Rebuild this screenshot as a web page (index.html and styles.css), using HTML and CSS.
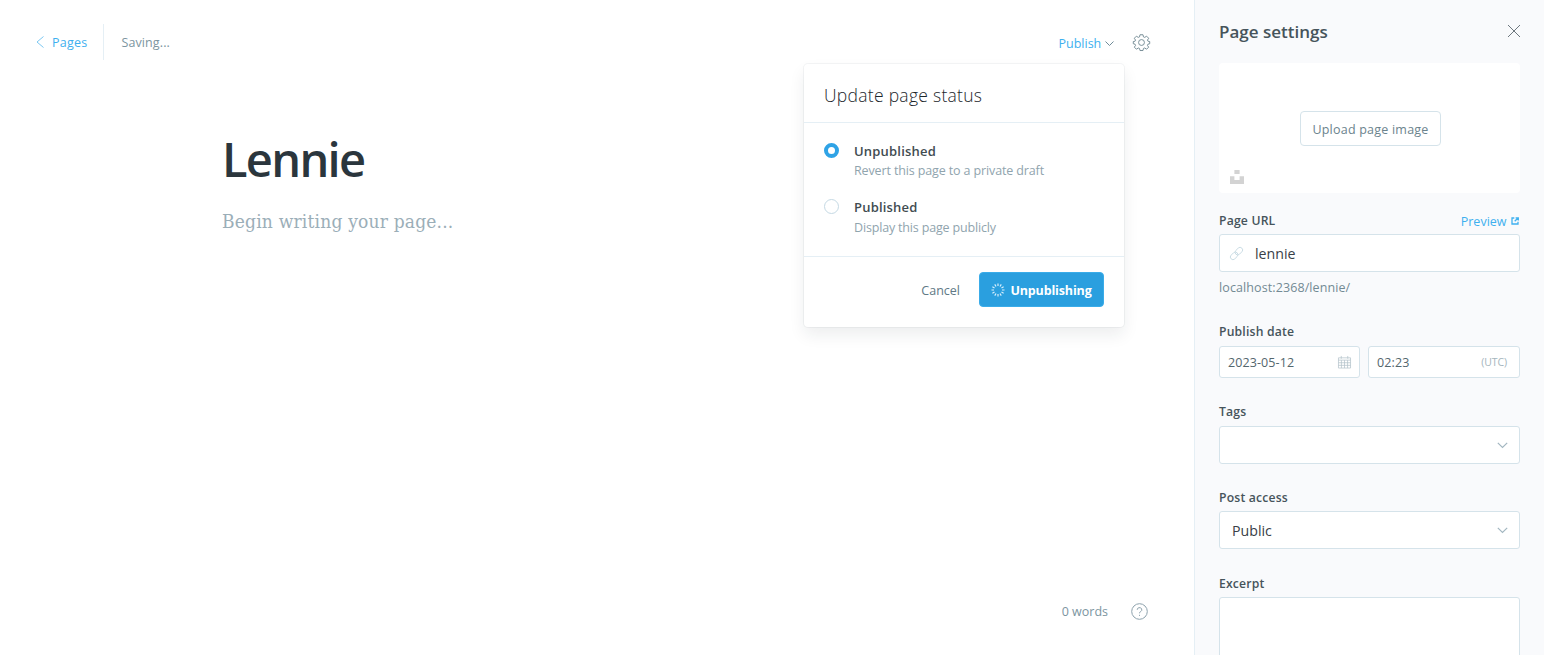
FILE: index.html
```
<!DOCTYPE html>
<html lang="en">
<head>
<meta charset="utf-8">
<title>Lennie</title>
<link rel="stylesheet" href="styles.css">
</head>
<body>
<div class="app">
  <main class="editor">
    <header class="topbar">
      <a class="back"><svg class="icon-back" viewBox="0 0 8 12"><path d="M7.500.5 1 6 7.500 11.500"/></svg><span class="t-pages">Pages</span></a>
      <span class="saving">Saving...</span>
      <div class="actions">
        <a class="publish"><span class="t-publish">Publish</span><svg class="icon-caret" viewBox="0 0 9 5"><path d="M.5.5 4.500 4.500 8.500.5"/></svg></a>
        <svg class="icon-gear" viewBox="-9 -9 18 18"><path d="M-1.600-8.200h3.200l.5 2.300 1.300.5 2-1.300 2.200 2.200-1.300 2 .5 1.100 1.900.4v2.300l-1.900.5-.5 1.300 1.300 1.800-2.200 2.200-2-1.300-1.300.5-.5 2.200h-3.200l-.5-2.200-1.300-.5-2 1.300-2.200-2.200 1.300-1.800-.5-1.300-1.900-.5v-2.300l1.900-.4.5-1.100-1.300-2 2.200-2.200 2 1.300 1.300-.5z"/><circle r="3.100"/></svg>
      </div>
    </header>
    <section class="content">
      <h1 class="title">Lennie</h1>
      <p class="placeholder">Begin writing your page...</p>
    </section>
    <footer class="footer">
      <span class="words">0 words</span>
      <svg class="icon-help" viewBox="0 0 17 17"><circle cx="8.500" cy="8.500" r="7.800"/><path d="M6.200 6.800a2.300 2.100 0 1 1 3.500 1.700c-.8.500-1.200.8-1.200 1.800M8.500 11.800v1.100"/></svg>
    </footer>

    <div class="menu">
      <div class="menu-head">Update page status</div>
      <div class="menu-body">
        <div class="option">
          <span class="radio radio-on"></span>
          <div class="option-text"><div class="option-name">Unpublished</div><div class="option-desc">Revert this page to a private draft</div></div>
        </div>
        <div class="option">
          <span class="radio"></span>
          <div class="option-text"><div class="option-name">Published</div><div class="option-desc option-desc-last">Display this page publicly</div></div>
        </div>
      </div>
      <div class="menu-foot">
        <span class="cancel">Cancel</span>
        <button class="primary"><svg class="icon-spin" viewBox="-7 -7 14 14"><path d="M0-6.500V-4M3.250-5.630 2-3.460M5.630-3.250 3.460-2M6.500 0H4M5.630 3.250 3.460 2M3.250 5.630 2 3.460M0 6.500V4M-3.250 5.630-2 3.460M-5.630 3.250-3.460 2M-6.500 0H-4M-5.630-3.250-3.460-2M-3.250-5.630-2-3.460"/></svg><span>Unpublishing</span></button>
      </div>
    </div>
  </main>

  <aside class="settings">
    <div class="settings-head"><h2 class="heading">Page settings</h2><svg class="icon-close" viewBox="0 0 14 14"><path d="M1 1 13 13M13 1 1 13"/></svg></div>
    <div class="uploader">
      <button class="upload">Upload page image</button>
      <svg class="icon-unsplash" viewBox="0 0 14 14"><path d="M4.400 0h5.200v4H4.400zM0 6.200h4.400v3.900h5.200V6.200H14V14H0z"/></svg>
    </div>
    <div class="field url">
      <div class="label-row"><label class="label">Page URL</label><a class="preview"><span>Preview</span><svg class="icon-out" viewBox="0 0 8 8"><path d="M3.300 1H1v6h6V4.800M4.600.8h2.700v2.700M7 1 3.700 4.300"/></svg></a></div>
      <div class="input tall"><svg class="icon-link" viewBox="0 0 14 14"><g transform="rotate(-45 7 7)"><rect x="-1.200" y="4.200" width="9.200" height="5.600" rx="2.800"/><rect x="6" y="4.200" width="9.200" height="5.600" rx="2.800"/></g></svg><span>lennie</span></div>
      <div class="hint">localhost:2368/lennie/</div>
    </div>
    <div class="field date">
      <label class="label">Publish date</label>
      <div class="date-row">
        <div class="input short day"><span>2023-05-12</span><svg class="icon-cal" viewBox="0 0 14 14"><path d="M.5 2.500h13v11H.5zM.5 5h13M.5 7.800h13M.5 10.600h13M3.700 5v8.500M7 5v8.500M10.300 5v8.500M3.500.5v3M10.500.5v3"/></svg></div>
        <div class="input short time"><span>02:23</span><span class="utc">(UTC)</span></div>
      </div>
    </div>
    <div class="field tags">
      <label class="label">Tags</label>
      <div class="input tall select"><span></span><svg class="icon-down" viewBox="0 0 11 7"><path d="M.8.8 5.500 5.500 10.200.8"/></svg></div>
    </div>
    <div class="field access">
      <label class="label">Post access</label>
      <div class="input tall select"><span class="v-public">Public</span><svg class="icon-down" viewBox="0 0 11 7"><path d="M.8.8 5.500 5.500 10.200.8"/></svg></div>
    </div>
    <div class="field excerpt">
      <label class="label">Excerpt</label>
      <div class="input area"></div>
    </div>
  </aside>
</div>
</body>
</html>
```
FILE: styles.css
```
* { box-sizing: border-box; }
body {
  margin: 0;
  font-family: "Open Sans", "Noto Sans", sans-serif;
  font-size: 12.5px;
  line-height: 18px;
  color: #394047;
  background: #fff;
}
svg { display: block; flex: none; fill: none; stroke-width: 1; overflow: visible; }
h1, h2, p { margin: 0; }
span, label, a, h1, h2, .option-name, .option-desc, .hint, .menu-head { white-space: nowrap; }
button { font: inherit; }

.app { display: flex; height: 655px; overflow: hidden; }
.editor { position: relative; flex: 1; display: flex; flex-direction: column; }

.topbar { display: flex; align-items: center; height: 84px; padding: 0 44px 0 36px; }
.back { display: flex; align-items: center; width: 68px; height: 36px; border-right: 1px solid #e5eff5; color: #3eb0ef; }
.t-pages { padding-top: 2px; letter-spacing: .25px; }
.icon-back { width: 8px; height: 12px; margin-right: 8px; stroke: #7cc8f2; }
.saving { margin-left: 17.5px; padding-top: 2px; letter-spacing: .1px; color: #7c959f; }
.actions { display: flex; align-items: center; margin-left: auto; }
.publish { display: flex; align-items: center; width: 74.5px; color: #3eb0ef; padding-top: 3px; }
.t-publish { width: 46px; padding-top: 1px; }
.icon-caret { width: 9px; height: 5px; stroke: #6f8b98; }
.icon-gear { width: 17px; height: 17px; stroke: #738a94; }

.content { flex: 1; padding: 40px 0 0 222px; }
.title { font-size: 47px; line-height: 70px; font-weight: 600; letter-spacing: -1.7px; color: #2b363d; }
.placeholder { margin-top: 12px; font: 19px/30px "DejaVu Serif Condensed", "DejaVu Serif", serif; letter-spacing: .19px; color: #9baeb8; }

.footer { display: flex; justify-content: flex-end; align-items: center; height: 88px; padding-right: 46px; }
.words { margin-right: 23px; padding-top: 2px; color: #7c959f; }
.icon-help { width: 17px; height: 17px; stroke: #8da2ad; }

.menu {
  position: absolute; left: 804px; top: 64px; width: 320px; height: 263px;
  background: #fff; border-radius: 4px;
  box-shadow: 0 0 0 1px rgba(99, 114, 130, .07), 0 8px 16px rgba(27, 39, 51, .08);
}
.menu-head { height: 59px; padding: 19px 20px 0; font-size: 17.5px; line-height: 24px; font-weight: 300; letter-spacing: .28px; border-bottom: 1px solid #e5eff5; color: #1c262b; }
.menu-body { height: 134px; padding: 20px 20px 0; border-bottom: 1px solid #e5eff5; }
.option { display: flex; height: 56.2px; }
.radio { width: 15px; height: 15px; margin-right: 15px; border: 1px solid #c5d9e4; border-radius: 50%; background: #fff; }
.radio-on { border: 4px solid #2fa3e6; }
.option-name { margin: -1px 0 1px; font-size: 13px; font-weight: 600; line-height: 18px; letter-spacing: .2px; color: #414c51; }
.option-desc { line-height: 20px; letter-spacing: -.13px; color: #90a4ae; }
.option-desc-last { padding-top: 1px; letter-spacing: -.17px; }
.menu-foot { display: flex; align-items: center; justify-content: flex-end; padding: 15px 20px; }
.cancel { margin-right: 19px; padding-top: 2px; color: #607985; }
.primary { display: flex; align-items: center; width: 125px; height: 35px; padding: 0 0 0 11px; border: 1px solid #3aace9; border-radius: 4px; background: #2a9fdf; color: #fff; font-weight: 700; letter-spacing: -.15px; }
.primary span { padding-top: 2px; }
.icon-spin { width: 14px; height: 14px; margin-right: 5.500px; stroke: #d8effc; stroke-width: 1.2; }

.settings { width: 350px; padding: 0 24px; background: #f9fafc; border-left: 1px solid #e5eff5; }
.settings-head { display: flex; align-items: center; justify-content: space-between; height: 63px; }
.heading { font-size: 17px; font-weight: 600; color: #46545b; }
.icon-close { width: 14px; height: 14px; margin: -1px -1px 0 0; stroke: #6d777e; }
.uploader { position: relative; display: flex; align-items: center; justify-content: center; width: 301px; height: 130px; border-radius: 4px; background: #fff; }
.upload { width: 141px; height: 35px; padding: 3px 0 0; margin-left: 2px; border: 1px solid #d5e3ea; border-radius: 4px; background: #fff; color: #6b838d; letter-spacing: .22px; white-space: nowrap; }
.icon-unsplash { position: absolute; left: 11px; bottom: 9px; width: 14px; height: 14px; fill: #d3d3d3; }

.label { display: block; line-height: 20px; padding-top: 1px; margin-bottom: 4px; font-weight: 600; font-size: 12.2px; letter-spacing: .18px; color: #46545b; }
.label-row { display: flex; justify-content: space-between; }
.preview { display: flex; align-items: center; height: 22px; padding-top: 3px; color: #3eb0ef; }
.icon-out { width: 8px; height: 8px; margin: -1px 1px 0 4.5px; stroke: #3eb0ef; stroke-width: 1.3; }
.input { display: flex; align-items: center; justify-content: space-between; border: 1px solid #d5e3ea; border-radius: 3px; background: #fff; }
.tall { height: 38px; font-size: 14.2px; padding: 0 12px; }
.short { height: 32px; padding: 0 8px; color: #54666d; }
.short span { padding-top: 1px; letter-spacing: .1px; }
.url { margin-top: 16px; height: 112px; }
.url .label { margin-top: 1px; margin-bottom: 3px; }
.url .input { justify-content: flex-start; padding-left: 9.5px; }
.url .input span { padding-top: 2px; }
.icon-link { width: 13px; height: 13px; margin-right: 12.5px; stroke: #c9dbe4; }
.hint { margin-top: 7px; letter-spacing: .1px; color: #738a94; }
.date { height: 80px; }
.date-row { display: flex; gap: 8px; }
.day { width: 141px; }
.time { width: 152px; padding-right: 12px; }
.icon-cal { width: 13px; height: 14px; stroke: #b4c2ca; stroke-width: .8; }
.short .utc { padding-top: 0; font-size: 10.5px; letter-spacing: -.1px; color: #a5b5bd; }
.tags, .access { height: 86px; }
.access .label, .excerpt .label { margin-bottom: 3px; }
.v-public { padding-top: 2px; }
.select { padding-right: 11px; }
.icon-down { width: 11px; height: 7px; stroke: #a3b7c1; stroke-width: 1.2; }
.area { height: 112px; }
```
